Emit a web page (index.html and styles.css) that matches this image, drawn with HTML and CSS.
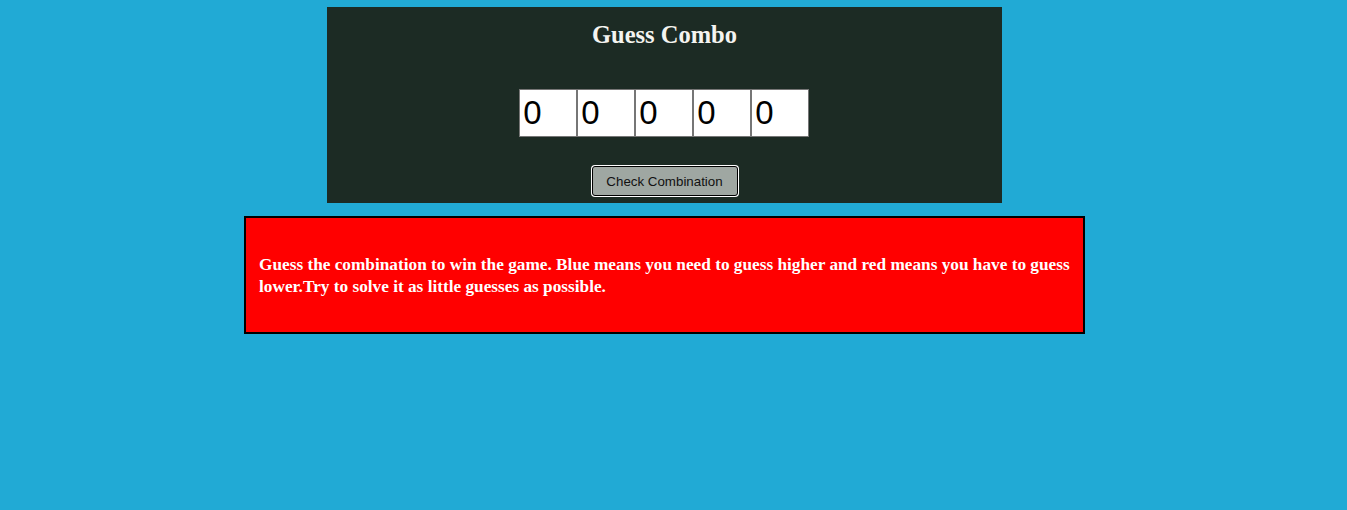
FILE: index.html
```html
<!DOCTYPE html>
<html>
<head>
<meta charset="utf-8">
<link rel="stylesheet" href="styles.css">
</head>
<body>
<div class="page">
  <div class="game">
    <h1 class="title">Guess Combo</h1>
    <div class="digits">
      <input class="digit" type="text" value="0">
      <input class="digit" type="text" value="0">
      <input class="digit" type="text" value="0">
      <input class="digit" type="text" value="0">
      <input class="digit" type="text" value="0">
    </div>
    <button class="check">Check Combination</button>
  </div>
  <div class="info">
    <p class="info-text">Guess the combination to win the game. Blue means you need to guess higher and red means you have to guess lower.Try to solve it as little guesses as possible.</p>
  </div>
</div>
</body>
</html>
```
FILE: styles.css
```css
html, body {
  margin: 0;
  padding: 0;
  background: #21aad5;
}
body {
  padding-top: 7px;
  font-family: "Liberation Serif", serif;
}
.page {
  width: 1313px;
  margin-left: 8px;
  display: flex;
  flex-direction: column;
  align-items: center;
  gap: 13px;
}
.game {
  width: 675px;
  height: 196px;
  box-sizing: border-box;
  background: #1c2b24;
  display: flex;
  flex-direction: column;
  align-items: center;
  padding-top: 13px;
}
.title {
  margin: 0;
  font-family: "Liberation Serif", serif;
  font-weight: bold;
  font-size: 24.5px;
  line-height: 30px;
  color: #f4f4f0;
}
.digits {
  display: flex;
  gap: 0.5px;
  margin-top: 39px;
  margin-left: -1px;
}
.digit {
  width: 57.5px;
  height: 48px;
  box-sizing: border-box;
  margin: 0;
  border: 1px solid #767676;
  padding: 0 0 0 3px;
  font-family: "Liberation Sans", sans-serif;
  font-size: 33px;
  color: #000;
  background: #fff;
  outline: none;
}
.check {
  margin-top: 29px;
  width: 146px;
  height: 30px;
  box-sizing: border-box;
  background: #9fa7a2;
  border: 1px solid #000;
  box-shadow: 0 0 0 1px #fff;
  border-radius: 3px;
  font-family: "Liberation Sans", sans-serif;
  font-size: 13.33px;
  color: #111;
  padding: 0;
}
.info {
  width: 841px;
  height: 118px;
  box-sizing: border-box;
  border: 2px solid #000;
  background: #ff0000;
  padding: 0 13px;
  display: flex;
  align-items: center;
}
.info-text {
  margin: 0;
  color: #fff;
  font-weight: bold;
  font-size: 17.25px;
  line-height: 22px;
  padding-top: 2px;
}
```
